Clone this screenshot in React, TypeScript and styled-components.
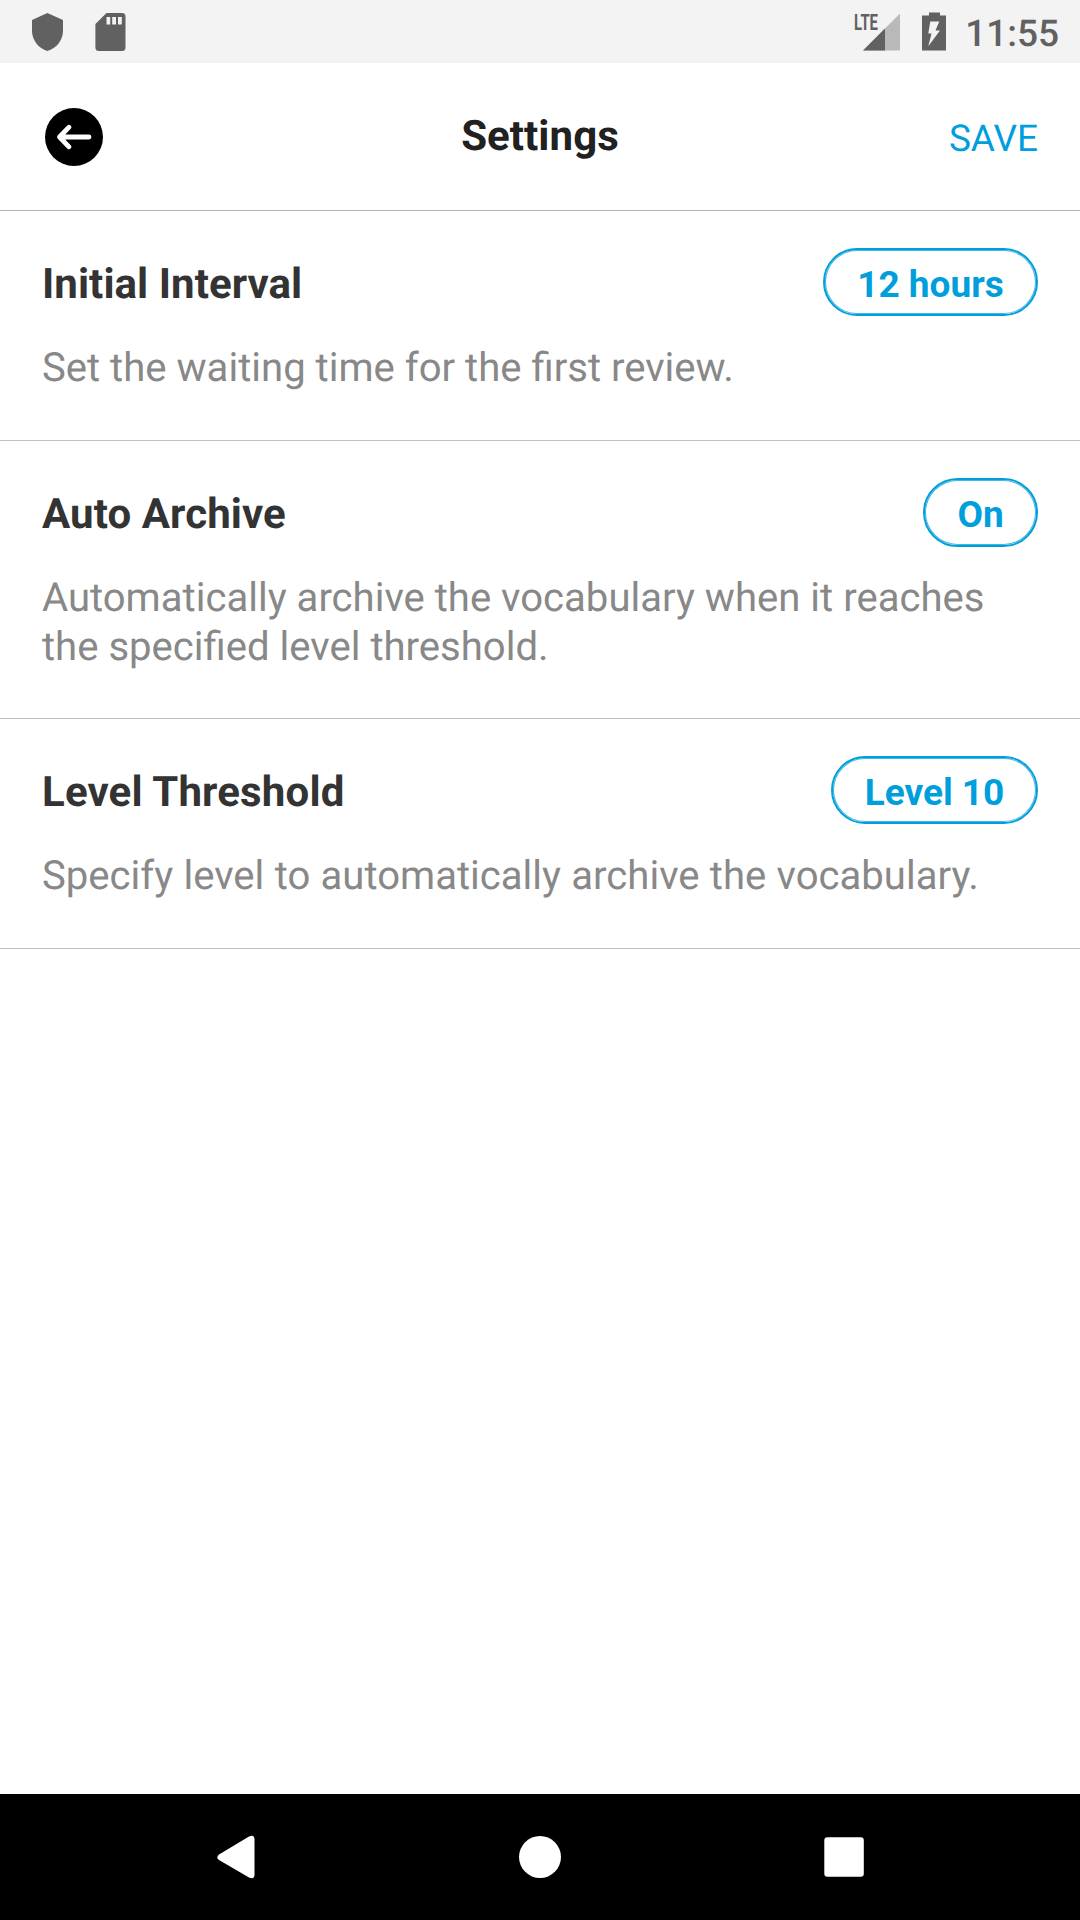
import React from "react";
import styled, { createGlobalStyle } from "styled-components";

const Global = createGlobalStyle`
  * { box-sizing: border-box; }
  body { margin: 0; background: #fff; font-family: Roboto, sans-serif; text-rendering: geometricPrecision; }
`;
const Screen = styled.div`
  width: 1080px;
  height: 1920px;
  display: flex;
  flex-direction: column;
  overflow: hidden;
`;
const StatusBar = styled.div`
  height: 63px;
  background: #f3f3f3;
  display: flex;
  justify-content: space-between;
  padding: 0 21px 0 26px;
`;
const Left = styled.div`
  display: flex;
  align-items: center;
  gap: 21px;
`;
const Right = styled.div`
  display: flex;
  align-items: center;
`;
const Signal = styled.svg`
  width: 48px;
  height: 40px;
  margin-right: 19px;
  overflow: visible;
`;
const Battery = styled.svg`
  width: 26px;
  height: 40px;
  margin-right: 18px;
`;
const Clock = styled.span`
  font-size: 37px;
  line-height: 63px;
  font-weight: 500;
  color: #616161;
  padding-top: 5px;
`;
const Header = styled.header`
  height: 148px;
  border-bottom: 1px solid #b4b4b4;
  display: grid;
  grid-template-columns: 200px 1fr 200px;
  align-items: center;
  padding: 0 42px;
`;
const Back = styled.button`
  border: 0;
  padding: 0;
  background: none;
  width: 64px;
  height: 64px;
  display: block;
`;
const Title = styled.h1`
  margin: 0;
  font-size: 42px;
  font-weight: 700;
  line-height: 50px;
  letter-spacing: 0.06px;
  color: #212121;
  text-align: center;
`;
const Save = styled.div`
  font-size: 37px;
  color: #009fdb;
  text-align: right;
  padding-top: 5px;
`;
const Section = styled.section<{ $bottom: number }>`
  border-bottom: 1px solid #c0c0c0;
  padding: 37px 42px ${(p) => p.$bottom}px;
`;
const Row = styled.div`
  display: flex;
  justify-content: space-between;
  align-items: flex-start;
  height: 68px;
`;
const Name = styled.h2<{ $tracking: number }>`
  margin: 0;
  padding-top: 4px;
  align-self: center;
  font-size: 42px;
  font-weight: 700;
  letter-spacing: ${(p) => p.$tracking}px;
  color: #333;
`;
const Pill = styled.button<{ $width: number; $height: number }>`
  width: ${(p) => p.$width}px;
  height: ${(p) => p.$height}px;
  border: 2px solid #009fdb;
  border-radius: 35px;
  box-shadow: inset 0 0 0 1px rgba(0, 159, 219, 0.75);
  background: #fff;
  color: #009fdb;
  font: 700 37px Roboto, sans-serif;
  padding: 4px 0 0;
  white-space: nowrap;
`;
const Description = styled.p<{ $gap: number }>`
  margin: 27px 0 0;
  font-size: 40.1px;
  line-height: 49px;
  word-spacing: ${(p) => p.$gap}px;
  color: #888;
`;
const NavBar = styled.nav`
  margin-top: auto;
  height: 126px;
  background: #000;
  display: flex;
  svg { display: block; }
`;

const settings = [
  { name: "Initial Interval", value: "12 hours", width: 215, height: 68, bottom: 48, tracking: 0.06, gap: 0, lines: ["Set the waiting time for the first review."] },
  { name: "Auto Archive", value: "On", width: 115, height: 69, bottom: 47, tracking: 0.09, gap: 0, lines: ["Automatically archive the vocabulary when it reaches", "the specified level threshold."] },
  { name: "Level Threshold", value: "Level 10", width: 207, height: 68, bottom: 48, tracking: 0.16, gap: 0.35, lines: ["Specify level to automatically archive the vocabulary."] },
];

export default function App() {
  return (
    <Screen>
      <Global />
      <StatusBar>
        <Left>
          <svg width="42" height="42" viewBox="0 0 42 42" fill="#616161"><path d="M21.300 2 37 9V20C37 29 30.500 37.500 21.300 40 12.500 37.500 6 29 6 20V9Z" /></svg>
          <svg width="42" height="42" viewBox="0 0 42 42" fill="#616161"><path fillRule="evenodd" d="M17.500 2H33a3.500 3.500 0 0 1 3.500 3.500V36.500A3.500 3.500 0 0 1 33 40H10A3.500 3.500 0 0 1 6.400 36.500V13ZM17.500 6V13.500H21.200V6ZM23.200 6V13.500H27V6ZM29 6V13.500H32.800V6Z" /></svg>
        </Left>
        <Right>
          <Signal viewBox="0 0 48 40">
            <path d="M46 1.500V38.500H9Z" fill="#b9b9b9" />
            <path d="M31 16.500V38.500H9Z" fill="#616161" />
            <text x="0" y="18" fontFamily="Roboto" fontSize="22.500" fontWeight="700" fill="#616161" textLength="24" lengthAdjust="spacingAndGlyphs">LTE</text>
          </Signal>
          <Battery viewBox="0 0 26 40">
            <path d="M8 .5H19V3.500H25V38.500H1V3.500H8Z" fill="#616161" />
            <path d="M9.300 9.500H18.300L14.500 18.500H19L7.300 34.300 10.500 21.500H7.300Z" fill="#f3f3f3" />
          </Battery>
          <Clock>11:55</Clock>
        </Right>
      </StatusBar>
      <Header>
        <Back aria-label="Back">
          <svg width="64" height="64" viewBox="0 0 64 64"><circle cx="32" cy="32" r="29" /><path d="M47 32H18M27 22.200 17.500 32l9.500 9.800" fill="none" stroke="#fff" strokeWidth="4.800" strokeLinecap="round" strokeLinejoin="round" /></svg>
        </Back>
        <Title>Settings</Title>
        <Save>SAVE</Save>
      </Header>
      {settings.map((s) => (
        <Section key={s.name} $bottom={s.bottom}>
          <Row><Name $tracking={s.tracking}>{s.name}</Name><Pill $width={s.width} $height={s.height}>{s.value}</Pill></Row>
          <Description $gap={s.gap}>{s.lines.map((l, i) => <React.Fragment key={l}>{i > 0 && <br />}{l}</React.Fragment>)}</Description>
        </Section>
      ))}
      <NavBar>
        <svg width="1080" height="126" viewBox="0 0 1080 126" fill="#fff"><path d="M219 60.500 249 42.500Q254 40 254.500 45V81Q254 86 249 83.500L219 66Q215.500 63.500 219 60.500Z" /><circle cx="540" cy="63" r="21" /><rect x="824.300" y="43.300" width="39.500" height="39.500" rx="3" /></svg>
      </NavBar>
    </Screen>
  );
}
